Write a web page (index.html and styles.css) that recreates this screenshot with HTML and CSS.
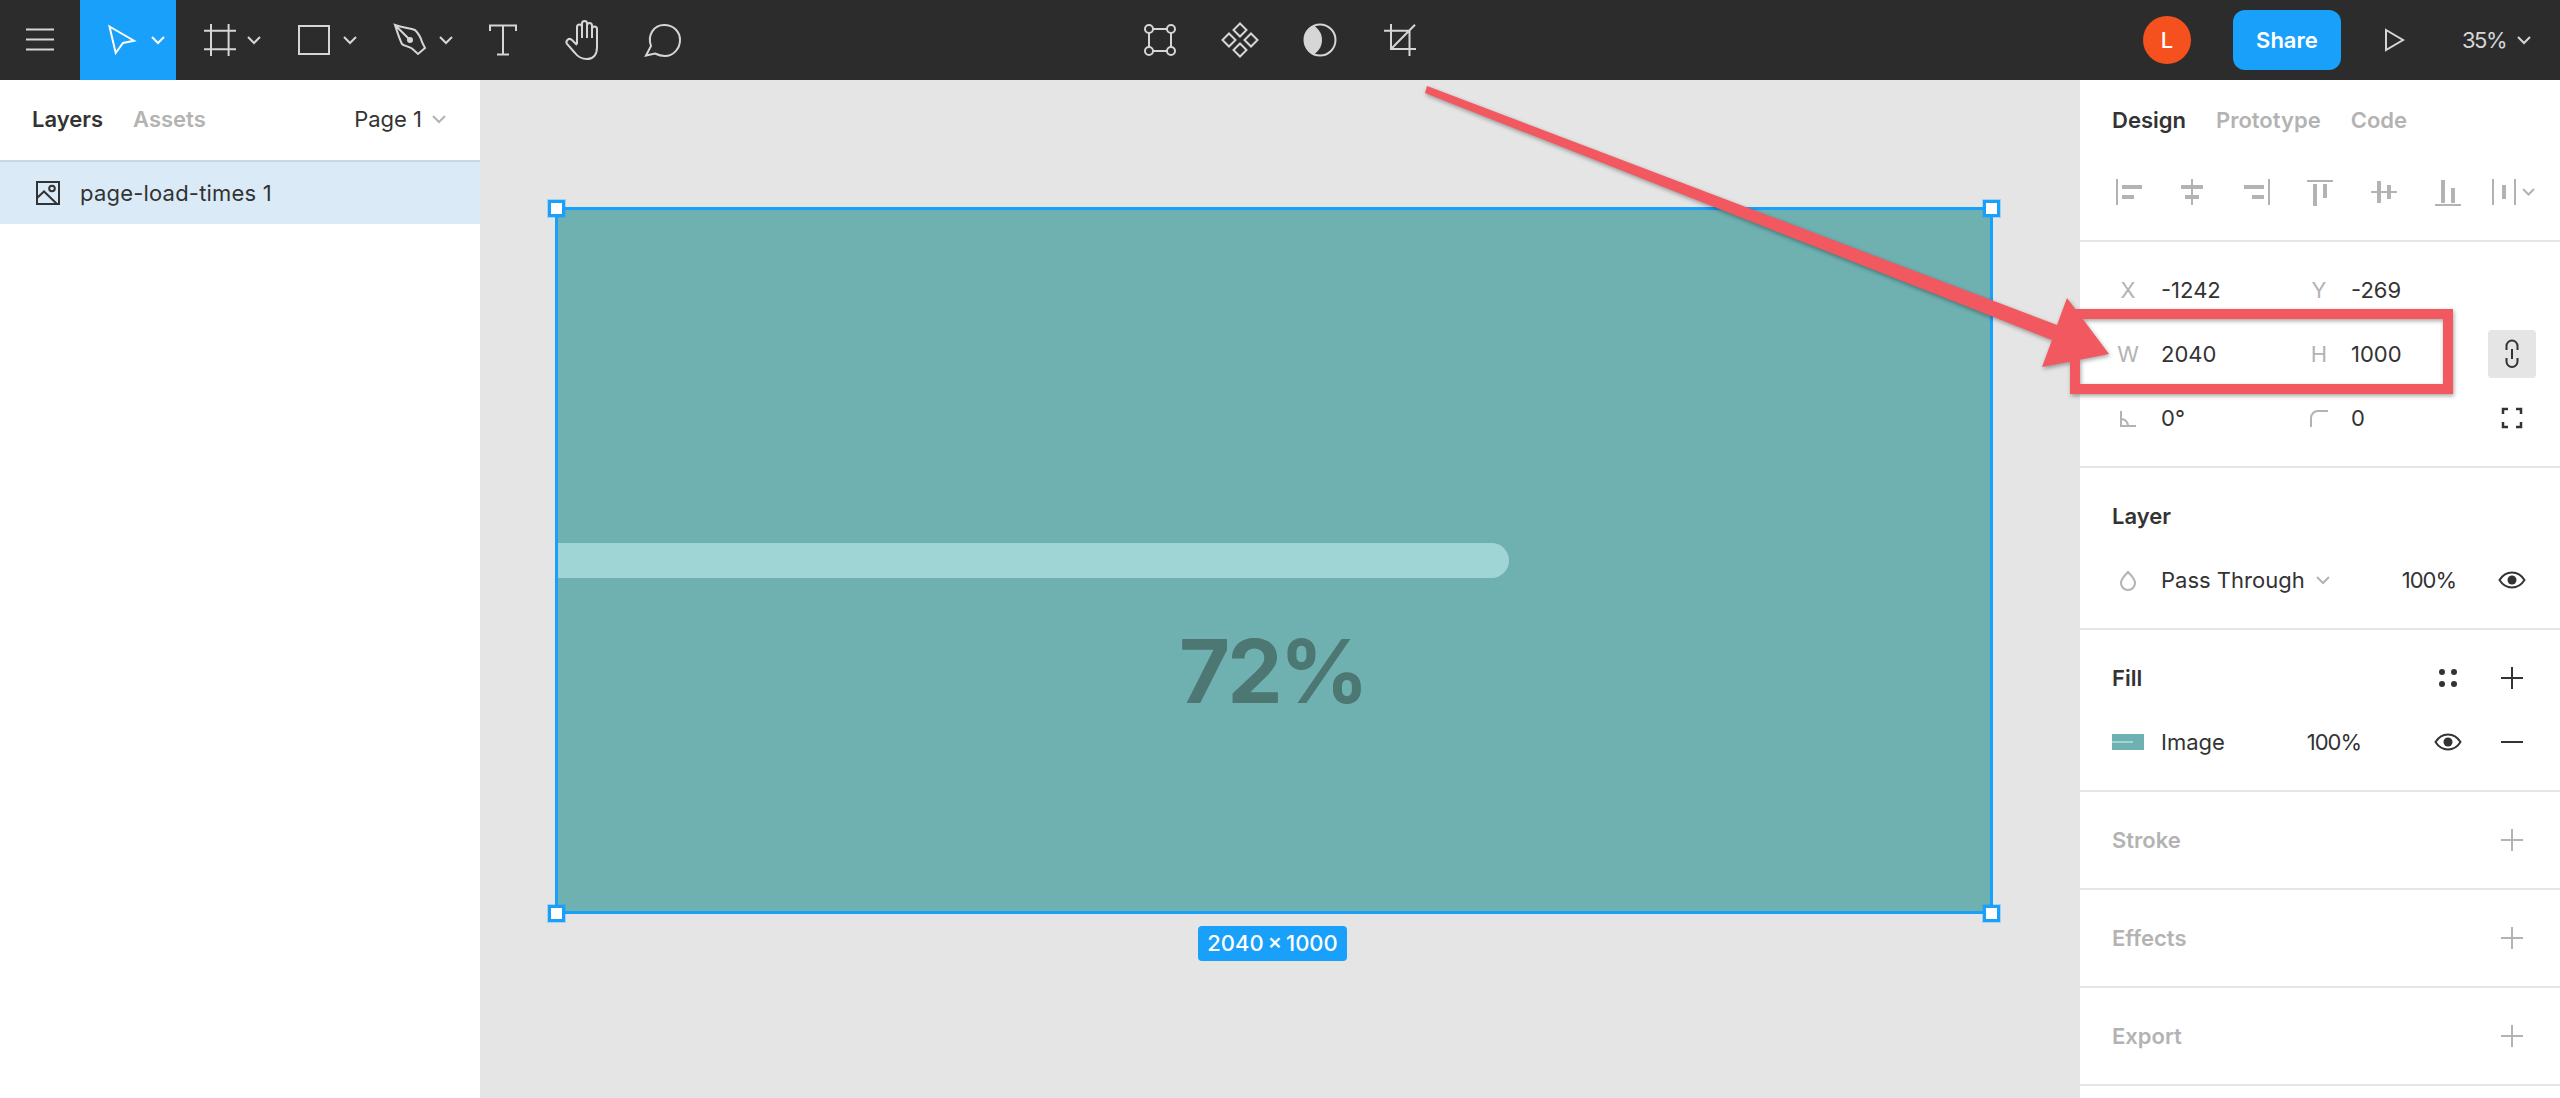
FILE: index.html
```html
<!DOCTYPE html>
<html lang="en">

<head>
    <meta charset="UTF-8">
    <title>page-load-times 1</title>
    <link rel="stylesheet" href="styles.css">
</head>

<body>
    <div class="app">
        <!-- top toolbar -->
        <header class="topbar">
            <div class="bar-left">
                <div class="tool tool-plain">
                    <svg class="ico" width="40" height="40" viewBox="0 0 40 40"><path d="M6 9.5H34M6 19.5H34M6 29.5H34"/></svg>
                </div>
                <div class="tool tool-active">
                    <svg class="ico" width="40" height="40" viewBox="0 0 40 40"><path d="M7.5 6.5L32 20.7L21 23L13.7 33Z"/></svg>
                    <svg class="chev" width="16" height="16" viewBox="0 0 16 16"><path d="M2 5L8 11L14 5"/></svg>
                </div>
                <div class="tool">
                    <svg class="ico" width="40" height="40" viewBox="0 0 40 40"><path d="M13 4V36M30.6 4V36M6 10.7H38M6 29.3H38"/></svg>
                    <svg class="chev" width="16" height="16" viewBox="0 0 16 16"><path d="M2 5L8 11L14 5"/></svg>
                </div>
                <div class="tool">
                    <svg class="ico" width="40" height="40" viewBox="0 0 40 40"><rect x="5" y="6" width="30" height="28"/></svg>
                    <svg class="chev" width="16" height="16" viewBox="0 0 16 16"><path d="M2 5L8 11L14 5"/></svg>
                </div>
                <div class="tool">
                    <svg class="ico" width="40" height="40" viewBox="0 0 40 40"><path d="M5 5C13 8 20 8 25 10C28 13 31 18 32 22L35 28L28 34L22 28.5C18 26 14 26 12 24C9 18 7 11 5 5ZM5 5L20 20"/><circle class="ico-fill" cx="20" cy="20" r="3"/></svg>
                    <svg class="chev" width="16" height="16" viewBox="0 0 16 16"><path d="M2 5L8 11L14 5"/></svg>
                </div>
                <div class="tool tool-plain">
                    <svg class="ico" width="40" height="40" viewBox="0 0 40 40"><path d="M6 11V5.5H32V11M19 5.5V34.5M13 34.5H25"/></svg>
                </div>
                <div class="tool tool-plain">
                    <svg class="ico" width="40" height="40" viewBox="0 0 40 40"><path d="M13 24V7A2.5 2.5 0 0 1 18 7V18V3.5A2.5 2.5 0 0 1 23 3.5V18V5.5A2.5 2.5 0 0 1 28 5.5V18V9A2.5 2.5 0 0 1 33 9V27C33 35 29 39 23 39C17 39 14 37 11 33L3 24C1 21 5 17 8 20L13 25"/></svg>
                </div>
                <div class="tool tool-plain">
                    <svg class="ico" width="40" height="40" viewBox="0 0 40 40"><path d="M2 35.5L7 26C3 15 10 5 20 5C30 5 36 12 36 20C36 29 29 36 21 36C17 36 14 35 11 33.5Z"/></svg>
                </div>
            </div>

            <div class="bar-center">
                <div class="tool tool-plain">
                    <svg class="ico" width="40" height="40" viewBox="0 0 40 40"><path d="M13 9H27M13 31H27M9 13V27M31 13V27"/><circle cx="9" cy="9" r="4"/><circle cx="31" cy="9" r="4"/><circle cx="9" cy="31" r="4"/><circle cx="31" cy="31" r="4"/></svg>
                </div>
                <div class="tool tool-plain">
                    <svg class="ico" width="40" height="40" viewBox="0 0 40 40"><path d="M20 3.5L26.5 10L20 16.5L13.5 10ZM9 13.5L15.5 20L9 26.5L2.5 20ZM31 13.5L37.5 20L31 26.5L24.5 20ZM20 23.5L26.5 30L20 36.5L13.5 30Z"/></svg>
                </div>
                <div class="tool tool-plain">
                    <svg class="ico" width="40" height="40" viewBox="0 0 40 40"><circle cx="20" cy="20" r="15.5"/><path class="ico-fill" d="M14 5.6A15.5 15.5 0 0 0 14 34.4C20 30 22 25 22 20C22 15 20 10 14 5.6Z"/></svg>
                </div>
                <div class="tool tool-plain">
                    <svg class="ico" width="40" height="40" viewBox="0 0 40 40"><path d="M11 4V29H36M4 10.7H29.5V36M11 29L35 4.7"/></svg>
                </div>
            </div>

            <div class="bar-right">
                <div class="avatar">L</div>
                <div class="share">Share</div>
                <svg class="ico play" width="24" height="24" viewBox="0 0 24 24"><path d="M3 2L20 12L3 22Z"/></svg>
                <span class="zoom-val">35%</span>
                <svg class="chev zoom-chev" width="16" height="16" viewBox="0 0 16 16"><path d="M2 5L8 11L14 5"/></svg>
            </div>
        </header>

        <div class="main">
            <!-- layers panel -->
            <aside class="left-panel">
                <div class="left-tabs">
                    <span class="tab tab-on">Layers</span>
                    <span class="tab">Assets</span>
                    <span class="page-name">Page 1</span>
                    <svg class="chev chev-grey" width="16" height="16" viewBox="0 0 16 16"><path d="M2 5L8 11L14 5"/></svg>
                </div>
                <div class="layer-row">
                    <svg class="ico ico-dark" width="24" height="24" viewBox="0 0 24 24"><rect x="1" y="1" width="22" height="22"/><circle cx="16" cy="7.5" r="2.8"/><path d="M1 17L8 10.5L21 23"/></svg>
                    <span>page-load-times 1</span>
                </div>
            </aside>

            <!-- canvas -->
            <section class="canvas">
                <div class="frame">
                    <div class="progress"></div>
                    <div class="percent">72%</div>
                </div>
                <i class="handle handle-tl"></i>
                <i class="handle handle-tr"></i>
                <i class="handle handle-bl"></i>
                <i class="handle handle-br"></i>
                <div class="dims">2040 × 1000</div>
            </section>

            <!-- design panel -->
            <aside class="right-panel">
                <div class="section section-top">
                    <div class="right-tabs">
                        <span class="tab tab-on">Design</span>
                        <span class="tab">Prototype</span>
                        <span class="tab">Code</span>
                    </div>
                    <div class="align-row">
                        <svg class="bars" width="40" height="40" viewBox="0 0 40 40"><path d="M8 7h2v26h-2zM14 13h20v4h-20zM14 23h12v4h-12z"/></svg>
                        <svg class="bars" width="40" height="40" viewBox="0 0 40 40"><path d="M19 7h2v26h-2zM9 13h22v4h-22zM13 23h14v4h-14z"/></svg>
                        <svg class="bars" width="40" height="40" viewBox="0 0 40 40"><path d="M32 7h2v26h-2zM8 13h20v4h-20zM16 23h12v4h-12z"/></svg>
                        <svg class="bars" width="40" height="40" viewBox="0 0 40 40"><path d="M7 8h26v2h-26zM13 12h4v22h-4zM23 12h4v14h-4z"/></svg>
                        <svg class="bars" width="40" height="40" viewBox="0 0 40 40"><path d="M7 19h26v2h-26zM13 9h4v22h-4zM23 13h4v14h-4z"/></svg>
                        <svg class="bars" width="40" height="40" viewBox="0 0 40 40"><path d="M7 32h26v2h-26zM13 8h4v23h-4zM23 16h4v15h-4z"/></svg>
                        <svg class="bars bars-last" width="56" height="40" viewBox="0 0 56 40"><path d="M8 7h2v26h-2zM30 7h2v26h-2zM18 13h4v14h-4z"/><path class="bars-chev" d="M39 17L44.5 22.5L50 17"/></svg>
                    </div>
                </div>

                <div class="section">
                    <div class="row">
                        <div class="prop"><span class="prop-label">X</span><span>-1242</span></div>
                        <div class="prop"><span class="prop-label">Y</span><span>-269</span></div>
                    </div>
                    <div class="row">
                        <div class="prop"><span class="prop-label">W</span><span>2040</span></div>
                        <div class="prop"><span class="prop-label">H</span><span>1000</span></div>
                        <div class="icon-box icon-box-on">
                            <svg class="ico ico-dark" width="48" height="48" viewBox="0 0 48 48"><path d="M18.5 20V16A5.5 5.5 0 0 1 29.5 16V20M18.5 28V31.5A5.5 5.5 0 0 0 29.5 31.5V28M24 19V29"/></svg>
                        </div>
                    </div>
                    <div class="row">
                        <div class="prop">
                            <span class="prop-label"><svg class="ico ico-grey" width="32" height="32" viewBox="0 0 32 32"><path d="M9 9V24H24M9 17C13 17 16 20 16 24"/></svg></span>
                            <span>0°</span>
                        </div>
                        <div class="prop">
                            <span class="prop-label"><svg class="ico ico-grey" width="32" height="32" viewBox="0 0 32 32"><path d="M8 25V16A7 7 0 0 1 15 9H25"/></svg></span>
                            <span>0</span>
                        </div>
                        <div class="icon-box">
                            <svg class="ico ico-dark ico-thick" width="48" height="48" viewBox="0 0 48 48"><path d="M15 20V15H20M28 15H33V20M33 28V33H28M20 33H15V28"/></svg>
                        </div>
                    </div>
                </div>

                <div class="section">
                    <div class="row"><span class="title">Layer</span></div>
                    <div class="row">
                        <svg class="ico ico-grey lead-ico" width="32" height="32" viewBox="0 0 32 32"><path d="M16 8C12 12 9 15 9 19A7 7 0 0 0 23 19C23 15 20 12 16 8Z"/></svg>
                        <span>Pass Through</span>
                        <svg class="chev chev-grey blend-chev" width="16" height="16" viewBox="0 0 16 16"><path d="M2 5L8 11L14 5"/></svg>
                        <span class="pct pct-layer">100%</span>
                        <div class="icon-box">
                            <svg class="ico ico-dark" width="48" height="48" viewBox="0 0 48 48"><path d="M11.5 24C15 18.5 19 16.5 24 16.5C29 16.5 33 18.5 36.5 24C33 29.5 29 31.5 24 31.5C19 31.5 15 29.5 11.5 24Z"/><circle class="ico-fill" cx="24" cy="24" r="4.5"/></svg>
                        </div>
                    </div>
                </div>

                <div class="section">
                    <div class="row">
                        <span class="title">Fill</span>
                        <div class="row-tools">
                            <div class="icon-box">
                                <svg class="ico ico-dark" width="48" height="48" viewBox="0 0 48 48"><circle class="ico-fill" cx="18" cy="18" r="3"/><circle class="ico-fill" cx="30" cy="18" r="3"/><circle class="ico-fill" cx="18" cy="30" r="3"/><circle class="ico-fill" cx="30" cy="30" r="3"/></svg>
                            </div>
                            <div class="icon-box">
                                <svg class="ico ico-dark" width="48" height="48" viewBox="0 0 48 48"><path d="M13 24H35M24 13V35"/></svg>
                            </div>
                        </div>
                    </div>
                    <div class="row">
                        <div class="swatch"><div class="swatch-bar"></div></div>
                        <span>Image</span>
                        <span class="pct pct-fill">100%</span>
                        <div class="row-tools row-tools-flat">
                            <div class="icon-box">
                                <svg class="ico ico-dark" width="48" height="48" viewBox="0 0 48 48"><path d="M11.5 24C15 18.5 19 16.5 24 16.5C29 16.5 33 18.5 36.5 24C33 29.5 29 31.5 24 31.5C19 31.5 15 29.5 11.5 24Z"/><circle class="ico-fill" cx="24" cy="24" r="4.5"/></svg>
                            </div>
                            <div class="icon-box">
                                <svg class="ico ico-dark" width="48" height="48" viewBox="0 0 48 48"><path d="M13 24H35"/></svg>
                            </div>
                        </div>
                    </div>
                </div>

                <div class="section">
                    <div class="row">
                        <span class="title title-off">Stroke</span>
                        <div class="row-tools"><div class="icon-box"><svg class="ico ico-grey" width="48" height="48" viewBox="0 0 48 48"><path d="M13 24H35M24 13V35"/></svg></div></div>
                    </div>
                </div>
                <div class="section">
                    <div class="row">
                        <span class="title title-off">Effects</span>
                        <div class="row-tools"><div class="icon-box"><svg class="ico ico-grey" width="48" height="48" viewBox="0 0 48 48"><path d="M13 24H35M24 13V35"/></svg></div></div>
                    </div>
                </div>
                <div class="section">
                    <div class="row">
                        <span class="title title-off">Export</span>
                        <div class="row-tools"><div class="icon-box"><svg class="ico ico-grey" width="48" height="48" viewBox="0 0 48 48"><path d="M13 24H35M24 13V35"/></svg></div></div>
                    </div>
                </div>
            </aside>
        </div>

        <!-- red annotation drawn over the screenshot -->
        <svg class="markup" width="2560" height="1098" viewBox="0 0 2560 1098">
            <rect class="markup-box" x="2075" y="314" width="373" height="75"/>
            <polygon class="markup-arrow" points="1427,86 2057,325 2067,298 2109,354 2042,367 2052,340 1425,93"/>
        </svg>
    </div>
</body>

</html>
```
FILE: styles.css
```css
/* reset start */
* {
    padding: 0;
    margin: 0;
    box-sizing: border-box;
}

html,
body {
    width: 100%;
    height: 100%;
}

body {
    overflow: hidden;
    font-family: Inter, "Liberation Sans", sans-serif;
    font-size: 22px;
    color: #333;
    background-color: #fff;
}

svg {
    display: block;
    flex: none;
}

/* reset end */
.app {
    width: 100%;
    height: 100%;
    position: relative;
    display: flex;
    flex-direction: column;
}

/* icons */
.ico {
    fill: none;
    stroke: currentColor;
    stroke-width: 2;
}

.ico-fill {
    fill: currentColor;
    stroke: none;
}

.ico-dark {
    color: #333;
}

.ico-grey {
    color: #b3b3b3;
}

.ico-thick {
    stroke-width: 2.5;
}

.chev {
    fill: none;
    stroke: currentColor;
    stroke-width: 2;
}

.chev-grey {
    color: #b3b3b3;
}

/* toolbar */
.topbar {
    height: 80px;
    flex: none;
    display: grid;
    grid-template-columns: 1fr auto 1fr;
    background-color: #2c2c2c;
    color: #d6d6d6;
}

.bar-left,
.bar-center,
.bar-right {
    display: flex;
    align-items: center;
}

.bar-right {
    justify-content: flex-end;
    padding-right: 28px;
}

.tool {
    width: 96px;
    height: 80px;
    padding-left: 22px;
    display: flex;
    align-items: center;
}

.tool .chev {
    margin-left: 8px;
}

.tool-plain {
    width: 80px;
    padding-left: 20px;
}

.tool-active {
    background-color: #18a0fb;
    color: #fff;
}

.avatar {
    width: 48px;
    height: 48px;
    border-radius: 50%;
    background-color: #f4511e;
    color: #fff;
    font-weight: 500;
    display: flex;
    align-items: center;
    justify-content: center;
    margin-right: 42px;
}

.share {
    width: 108px;
    height: 60px;
    border-radius: 12px;
    background-color: #18a0fb;
    color: #fff;
    font-weight: 600;
    display: flex;
    align-items: center;
    justify-content: center;
}

.play {
    margin-left: 42px;
}

.zoom-val {
    margin-left: 55px;
    letter-spacing: -1.5px;
}

.zoom-chev {
    margin-left: 10px;
}

/* main area */
.main {
    flex: 1;
    min-height: 0;
    display: flex;
}

.left-panel,
.right-panel {
    width: 480px;
    flex: none;
    background-color: #fff;
}

.left-tabs {
    height: 82px;
    padding: 0 33px 2px 32px;
    border-bottom: 2px solid #c5d8e6;
    display: flex;
    align-items: center;
}

.tab {
    font-weight: 600;
    color: #b3b3b3;
    margin-right: 30px;
}

.tab-on {
    color: #333;
}

.page-name {
    margin-left: auto;
    margin-right: 9px;
}

.layer-row {
    height: 62px;
    padding-left: 36px;
    background-color: #daebf7;
    display: flex;
    align-items: center;
    gap: 20px;
    letter-spacing: .2px;
}

.canvas {
    flex: 1;
    position: relative;
    background-color: #e5e5e5;
}

.frame {
    position: absolute;
    left: 75px;
    top: 127px;
    width: 1438px;
    height: 707px;
    border: 3px solid #18a0fb;
    background-color: #6fb1b1;
    padding-top: 333px;
}

.progress {
    width: 951px;
    height: 35px;
    background-color: #a0d5d6;
    border-radius: 0 18px 18px 0;
}

.percent {
    margin-top: 40px;
    padding-right: 3px;
    text-align: center;
    font-size: 88px;
    line-height: 106px;
    font-weight: 700;
    letter-spacing: -3px;
    color: #4d7772;
}

.handle {
    position: absolute;
    width: 17px;
    height: 17px;
    background-color: #fff;
    border: 3px solid #18a0fb;
    box-shadow: 0 0 0 1px rgba(24, 160, 251, .3);
}

.handle-tl {
    left: 68px;
    top: 120px;
}

.handle-tr {
    left: 1503px;
    top: 120px;
}

.handle-bl {
    left: 68px;
    top: 825px;
}

.handle-br {
    left: 1503px;
    top: 825px;
}

.dims {
    position: absolute;
    left: 718px;
    top: 846px;
    width: 149px;
    height: 35px;
    border-radius: 4px;
    background-color: #18a0fb;
    color: #fff;
    font-size: 22px;
    font-weight: 500;
    word-spacing: -2px;
    line-height: 35px;
    text-align: center;
    white-space: nowrap;
}

/* design panel */
.section {
    padding: 16px 24px 16px 32px;
    border-bottom: 2px solid #e5e5e5;
}

.section-top {
    padding: 0;
}

.right-tabs {
    height: 80px;
    padding-left: 32px;
    display: flex;
    align-items: center;
}

.align-row {
    height: 80px;
    padding-left: 28px;
    display: flex;
    align-items: flex-start;
    gap: 24px;
    padding-top: 12px;
}

.bars {
    fill: #b3b3b3;
}

.bars-last {
    margin-left: -8px;
}

.bars-chev {
    fill: none;
    stroke: #b3b3b3;
    stroke-width: 2;
}

.row {
    height: 64px;
    display: flex;
    align-items: center;
}

.prop {
    width: 191px;
    flex: none;
    display: flex;
    align-items: center;
}

.prop + .prop {
    width: 185px;
}

.prop-label {
    width: 32px;
    height: 32px;
    margin-right: 16px;
    color: #b3b3b3;
    line-height: 32px;
    text-align: center;
}

.prop:first-child .prop-label {
    margin-right: 17px;
}

.icon-box {
    width: 48px;
    height: 48px;
    border-radius: 4px;
    flex: none;
}

.icon-box-on {
    background-color: #e5e5e5;
}

.prop + .icon-box {
    margin-left: auto;
}

.title {
    font-weight: 600;
}

.title-off {
    color: #b3b3b3;
}

.lead-ico,
.swatch {
    margin-right: 17px;
}

.blend-chev {
    margin-left: 10px;
}

.pct {
    margin-left: auto;
    letter-spacing: -1px;
}

.pct-layer {
    margin-right: 32px;
}

.pct-fill {
    margin-right: 63px;
}

.row-tools {
    margin-left: auto;
    display: flex;
    gap: 16px;
}

.row-tools-flat {
    margin-left: 0;
}

.swatch {
    width: 32px;
    height: 16px;
    background-color: #6fb1b1;
    padding-top: 7px;
}

.swatch-bar {
    width: 21px;
    height: 2px;
    background-color: #a0d5d6;
}

/* annotation */
.markup {
    position: absolute;
    left: 0;
    top: 0;
    pointer-events: none;
    filter: drop-shadow(1px 2px 2px rgba(0, 0, 0, .35));
}

.markup-box {
    fill: none;
    stroke: #f25860;
    stroke-width: 10;
}

.markup-arrow {
    fill: #f25860;
}
```
